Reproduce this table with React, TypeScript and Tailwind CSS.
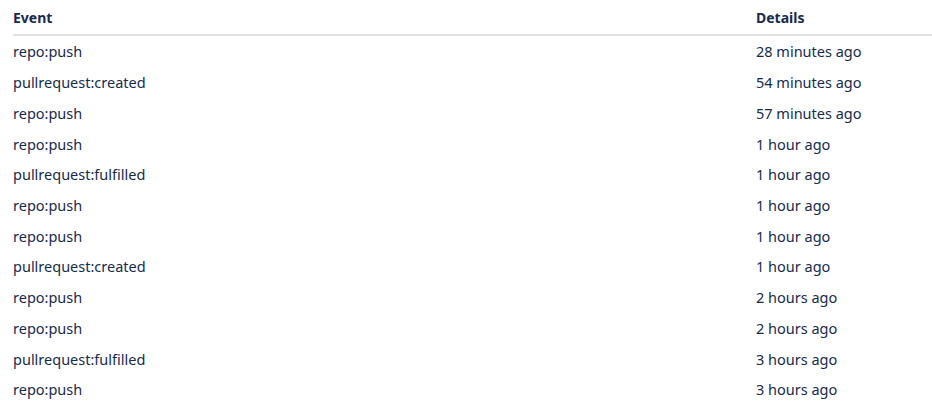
const rows = [
  { event: "repo:push", details: "28 minutes ago" },
  { event: "pullrequest:created", details: "54 minutes ago" },
  { event: "repo:push", details: "57 minutes ago" },
  { event: "repo:push", details: "1 hour ago" },
  { event: "pullrequest:fulfilled", details: "1 hour ago" },
  { event: "repo:push", details: "1 hour ago" },
  { event: "repo:push", details: "1 hour ago" },
  { event: "pullrequest:created", details: "1 hour ago" },
  { event: "repo:push", details: "2 hours ago" },
  { event: "repo:push", details: "2 hours ago" },
  { event: "pullrequest:fulfilled", details: "3 hours ago" },
  { event: "repo:push", details: "3 hours ago" },
];

const App = () => {
  return (
    <div
      className="min-h-screen bg-white pl-[13px] text-[#172b4d] text-[14.5px]"
      style={{ fontFamily: '"Noto Sans", "Open Sans", sans-serif' }}
    >
      <table className="w-full border-collapse">
        <thead>
          <tr className="border-b-2 border-[#dfe1e6]">
            <th className="w-[743px] text-left text-[14px] font-bold pt-[8px] pb-[6px] leading-[20px]">Event</th>
            <th className="text-left text-[14px] font-bold pt-[8px] pb-[6px] leading-[20px]">Details</th>
          </tr>
        </thead>
        <tbody>
          {/* first row sits a pixel lower under the rule */}
          <tr className="h-[1px]"><td colSpan={2} className="p-0"></td></tr>
          {rows.map((row, index) => (
            <tr key={index} className="h-[30.73px]">
              <td className="leading-[20px] py-0">{row.event}</td>
              <td className="leading-[20px] py-0">{row.details}</td>
            </tr>
          ))}
        </tbody>
      </table>
    </div>
  );
};

export default App;
